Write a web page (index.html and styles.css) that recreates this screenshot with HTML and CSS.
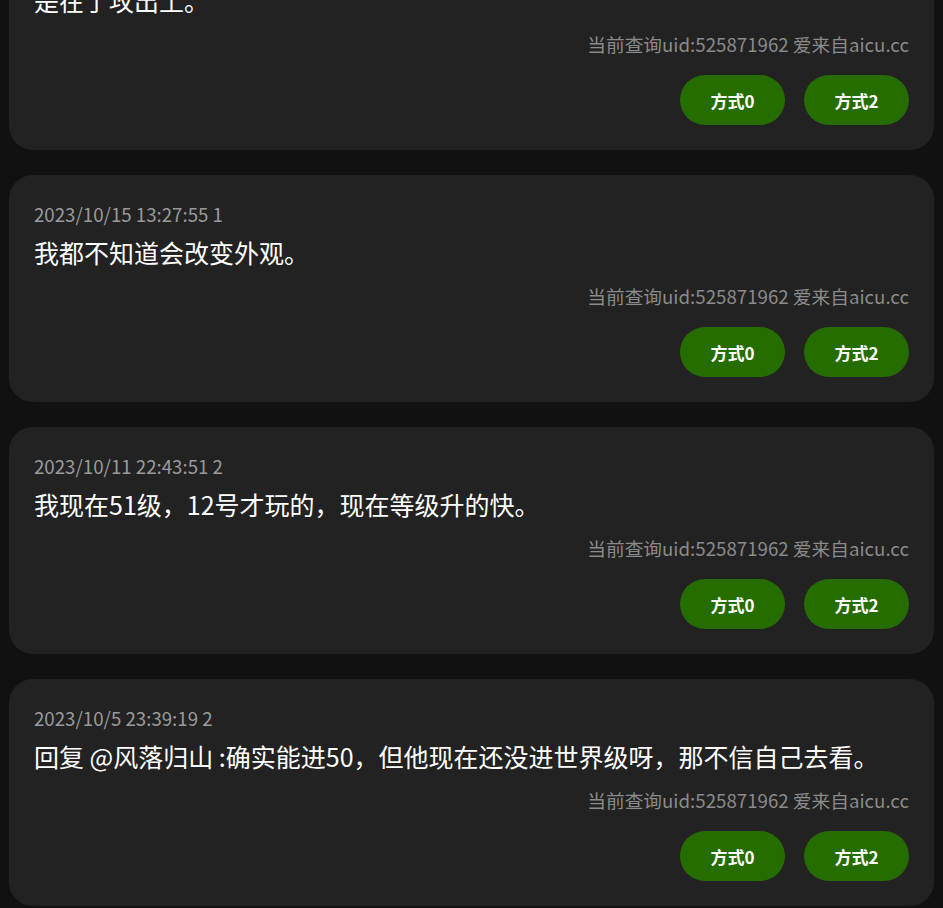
FILE: index.html
```html
<!DOCTYPE html>
<html lang="zh-CN">
<head>
<meta charset="utf-8">
<title>评论</title>
<link rel="stylesheet" href="styles.css">
</head>
<body>
<div class="list">
  <div class="card">
    <div class="date">2023/10/16 09:12:30 3</div>
    <div class="text">是在了攻出土。</div>
    <div class="uid">当前查询uid:525871962 爱来自aicu.cc</div>
    <div class="actions"><button class="btn">方式0</button><button class="btn">方式2</button></div>
  </div>
  <div class="card">
    <div class="date">2023/10/15 13:27:55 1</div>
    <div class="text">我都不知道会改变外观。</div>
    <div class="uid">当前查询uid:525871962 爱来自aicu.cc</div>
    <div class="actions"><button class="btn">方式0</button><button class="btn">方式2</button></div>
  </div>
  <div class="card">
    <div class="date">2023/10/11 22:43:51 2</div>
    <div class="text">我现在51级，12号才玩的，现在等级升的快。</div>
    <div class="uid">当前查询uid:525871962 爱来自aicu.cc</div>
    <div class="actions"><button class="btn">方式0</button><button class="btn">方式2</button></div>
  </div>
  <div class="card">
    <div class="date">2023/10/5 23:39:19 2</div>
    <div class="text">回复 @风落归山 :确实能进50，但他现在还没进世界级呀，那不信自己去看。</div>
    <div class="uid">当前查询uid:525871962 爱来自aicu.cc</div>
    <div class="actions"><button class="btn">方式0</button><button class="btn">方式2</button></div>
  </div>
</div>
</body>
</html>
```
FILE: styles.css
```css
html, body {
  margin: 0;
  padding: 0;
  background: #111111;
  font-family: "Noto Sans CJK SC", "Noto Sans", sans-serif;
}
.list {
  display: flex;
  flex-direction: column;
  gap: 25px;
  padding: 0 9px 30px;
  margin-top: -77px;
}
.card {
  background: #222222;
  border-radius: 24px;
  padding: 25px;
  display: flex;
  flex-direction: column;
}
.date {
  font-size: 18.7px;
  line-height: 27px;
  color: #9a9a9a;
}
.text {
  margin-top: 7px;
  font-size: 25px;
  line-height: 36px;
  color: #ffffff;
}
.uid {
  margin-top: 12px;
  font-size: 18.7px;
  line-height: 27px;
  color: #8a8a8a;
  text-align: right;
}
.actions {
  margin-top: 18px;
  display: flex;
  justify-content: flex-end;
  gap: 19px;
}
.btn {
  width: 105px;
  height: 50px;
  border: none;
  border-radius: 25px;
  background: #266d00;
  color: #ffffff;
  font-family: inherit;
  font-size: 17px;
  font-weight: 700;
  padding: 0;
}
```
